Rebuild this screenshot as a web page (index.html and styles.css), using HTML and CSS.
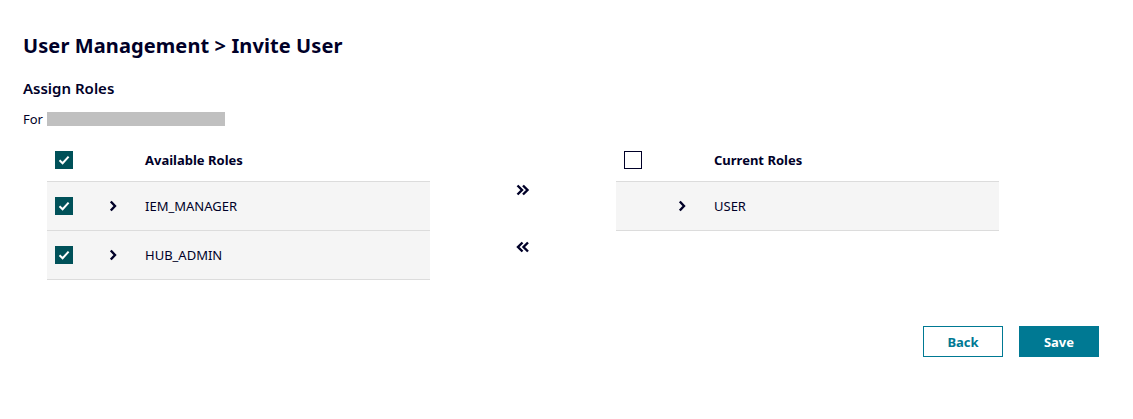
FILE: index.html
```html
<!DOCTYPE html>
<html lang="en">
<head>
<meta charset="utf-8">
<title>Invite User</title>
<link rel="stylesheet" href="styles.css">
</head>
<body>
<div class="page">
  <h1 class="title">User Management &gt; Invite User</h1>
  <h2 class="subtitle">Assign Roles</h2>
  <div class="for-line"><span>For</span><span class="redacted"></span></div>

  <div class="transfer">
    <div class="table">
      <div class="row header">
        <span class="cell check"><span class="cb checked"><svg viewBox="0 0 18 18" width="18" height="18"><path d="M4.5 9.2 L7.6 12.2 L13.6 5.6" fill="none" stroke="#fff" stroke-width="2"/></svg></span></span>
        <span class="cell expand"></span>
        <span class="cell name">Available Roles</span>
      </div>
      <div class="row item">
        <span class="cell check"><span class="cb checked"><svg viewBox="0 0 18 18" width="18" height="18"><path d="M4.5 9.2 L7.6 12.2 L13.6 5.6" fill="none" stroke="#fff" stroke-width="2"/></svg></span></span>
        <span class="cell expand"><svg viewBox="0 0 8 12" width="8" height="12"><path d="M1.8 1.5 L6 6 L1.8 10.5" fill="none" stroke="#000028" stroke-width="2.4"/></svg></span>
        <span class="cell name">IEM_MANAGER</span>
      </div>
      <div class="row item">
        <span class="cell check"><span class="cb checked"><svg viewBox="0 0 18 18" width="18" height="18"><path d="M4.5 9.2 L7.6 12.2 L13.6 5.6" fill="none" stroke="#fff" stroke-width="2"/></svg></span></span>
        <span class="cell expand"><svg viewBox="0 0 8 12" width="8" height="12"><path d="M1.8 1.5 L6 6 L1.8 10.5" fill="none" stroke="#000028" stroke-width="2.4"/></svg></span>
        <span class="cell name">HUB_ADMIN</span>
      </div>
    </div>

    <div class="moves">
      <button class="move" aria-label="Add"><svg viewBox="0 0 14 12" width="14" height="12"><path d="M1.5 1.5 L6 6 L1.5 10.5 M7 1.5 L11.5 6 L7 10.5" fill="none" stroke="#000028" stroke-width="2.4"/></svg></button>
      <button class="move" aria-label="Remove"><svg viewBox="0 0 14 12" width="14" height="12"><path d="M6.5 1.5 L2 6 L6.5 10.5 M12 1.5 L7.5 6 L12 10.5" fill="none" stroke="#000028" stroke-width="2.4"/></svg></button>
    </div>

    <div class="table">
      <div class="row header">
        <span class="cell check"><span class="cb"></span></span>
        <span class="cell expand"></span>
        <span class="cell name">Current Roles</span>
      </div>
      <div class="row item">
        <span class="cell check"></span>
        <span class="cell expand"><svg viewBox="0 0 8 12" width="8" height="12"><path d="M1.8 1.5 L6 6 L1.8 10.5" fill="none" stroke="#000028" stroke-width="2.4"/></svg></span>
        <span class="cell name">USER</span>
      </div>
    </div>
  </div>

  <div class="actions">
    <button class="btn secondary">Back</button>
    <button class="btn primary">Save</button>
  </div>
</div>
</body>
</html>
```

FILE: styles.css
```css
* { box-sizing: border-box; }
html, body { margin: 0; padding: 0; background: #fff; }
body {
  font-family: "Noto Sans", "Open Sans", sans-serif;
  color: #000028;
}
.page {
  padding: 32px 34px 0 23px;
}
.title {
  margin: 0;
  font-size: 20px;
  font-weight: 700;
  line-height: 28px;
  letter-spacing: 0.1px;
}
.subtitle {
  margin: 18px 0 0;
  font-size: 15px;
  font-weight: 600;
  line-height: 20px;
}
.for-line {
  display: flex;
  align-items: center;
  gap: 4px;
  margin-top: 14px;
  font-size: 13px;
  line-height: 14px;
}
.redacted {
  display: inline-block;
  width: 178px;
  height: 14px;
  background: #c0c0c0;
}
.transfer {
  display: flex;
  margin: 14px 0 0 24px;
}
.table {
  width: 383px;
}
.row {
  display: flex;
  align-items: center;
  border-bottom: 1px solid #dcdcdc;
  font-size: 13px;
}
.row.header {
  height: 42px;
  font-weight: 700;
  padding-bottom: 2px;
}
.row.item {
  height: 49px;
  background: #f5f5f5;
}
.cell.check {
  width: 61px;
  padding-left: 8px;
  display: flex;
}
.cell.expand {
  width: 37px;
  display: flex;
  padding-left: 1px;
}
.cb {
  width: 18px;
  height: 18px;
  border: 1px solid #000028;
  display: inline-block;
}
.cb.checked {
  border: none;
  background: #005159;
}
.cb svg { display: block; }
.moves {
  width: 186px;
  display: flex;
  flex-direction: column;
  align-items: center;
  padding-top: 44px;
  gap: 45px;
}
.move {
  border: none;
  background: none;
  padding: 0;
  width: 14px;
  height: 12px;
  cursor: pointer;
}
.move svg { display: block; }
.actions {
  display: flex;
  justify-content: flex-end;
  gap: 16px;
  margin-top: 46px;
}
.btn {
  width: 80px;
  height: 31px;
  font-family: inherit;
  font-size: 13px;
  font-weight: 700;
  cursor: pointer;
}
.btn.secondary {
  background: #fff;
  color: #007993;
  border: 1px solid #007993;
}
.btn.primary {
  background: #007993;
  color: #fff;
  border: none;
}
```
